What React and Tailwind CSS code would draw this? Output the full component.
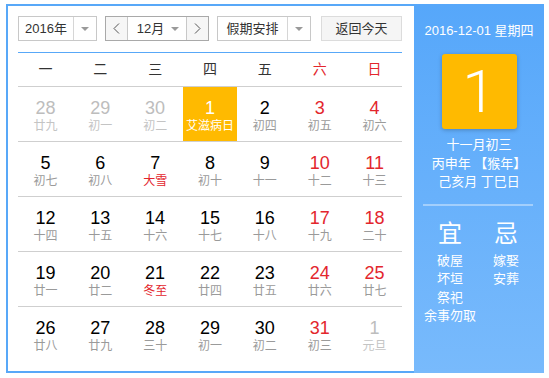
import React from 'react';

const RED = 'text-[#e3262d]';

const weeks = [
  [
    { d: '28', l: '廿九', other: true },
    { d: '29', l: '初一', other: true },
    { d: '30', l: '初二', other: true },
    { d: '1', l: '艾滋病日', today: true },
    { d: '2', l: '初四' },
    { d: '3', l: '初五', weekend: true },
    { d: '4', l: '初六', weekend: true },
  ],
  [
    { d: '5', l: '初七' },
    { d: '6', l: '初八' },
    { d: '7', l: '大雪', term: true },
    { d: '8', l: '初十' },
    { d: '9', l: '十一' },
    { d: '10', l: '十二', weekend: true },
    { d: '11', l: '十三', weekend: true },
  ],
  [
    { d: '12', l: '十四' },
    { d: '13', l: '十五' },
    { d: '14', l: '十六' },
    { d: '15', l: '十七' },
    { d: '16', l: '十八' },
    { d: '17', l: '十九', weekend: true },
    { d: '18', l: '二十', weekend: true },
  ],
  [
    { d: '19', l: '廿一' },
    { d: '20', l: '廿二' },
    { d: '21', l: '冬至', term: true },
    { d: '22', l: '廿四' },
    { d: '23', l: '廿五' },
    { d: '24', l: '廿六', weekend: true },
    { d: '25', l: '廿七', weekend: true },
  ],
  [
    { d: '26', l: '廿八' },
    { d: '27', l: '廿九' },
    { d: '28', l: '三十' },
    { d: '29', l: '初一' },
    { d: '30', l: '初二' },
    { d: '31', l: '初三', weekend: true },
    { d: '1', l: '元旦', other: true },
  ],
];

const weekdays = ['一', '二', '三', '四', '五', '六', '日'];

const Caret = () => (
  <span className="block w-0 h-0 border-l-[4px] border-r-[4px] border-t-[4px] border-l-transparent border-r-transparent border-t-[#9a9a9a]" />
);

const Chevron = ({ dir }) => (
  <svg width="7" height="11" viewBox="0 0 7 11">
    <polyline
      points={dir === 'left' ? '6,0.5 1,5.5 6,10.5' : '1,0.5 6,5.5 1,10.5'}
      fill="none"
      stroke="#555"
      strokeWidth="1"
    />
  </svg>
);

const DayCell = ({ day }) => {
  let numColor = 'text-black';
  let lunarColor = 'text-[#9a9a9a]';
  if (day.other) {
    numColor = 'text-[#bdbdbd]';
    lunarColor = 'text-[#c4c4c4]';
  }
  if (day.weekend) numColor = RED;
  if (day.term) lunarColor = RED;
  if (day.today) {
    numColor = 'text-white';
    lunarColor = 'text-white';
  }

  return (
    <div className={`flex flex-col items-center pt-[11px] ${day.today ? 'bg-[#ffba00]' : ''}`}>
      <div className={`text-[18px] leading-[20px] ${numColor}`} style={{ fontFamily: '"Liberation Sans", Arial, sans-serif' }}>
        {day.d}
      </div>
      <div className={`text-[12px] leading-[16px] whitespace-nowrap ${lunarColor}`}>{day.l}</div>
    </div>
  );
};

export default function App() {
  return (
    <div
      className="pl-[6px] pt-[4px] bg-white min-h-[378px]"
      style={{ fontFamily: '"Liberation Sans", "Noto Sans CJK SC", sans-serif' }}
    >
      <div className="flex w-[538px] h-[369px]">
        {/* Calendar */}
        <div className="w-[408px] border-l-2 border-t-2 border-b-2 border-[#58a8f8] pl-[10px] pr-[12px] pt-[10px] bg-white">
          {/* Controls */}
          <div className="flex h-[25px] text-[13px] text-[#333]">
            <div className="flex w-[79px] border border-[#c8c8c8]">
              <div className="w-[55px] flex items-center justify-center border-r border-[#d6d6d6]">2016年</div>
              <div className="flex-1 flex items-center justify-center">
                <Caret />
              </div>
            </div>
            <div className="flex w-[104px] ml-[8px] border border-[#a9a9a9]">
              <div className="w-[22px] flex items-center justify-center bg-[#f6f6f6] border-r border-[#c8c8c8]">
                <Chevron dir="left" />
              </div>
              <div className="flex-1 flex items-center justify-center gap-[7px] pl-[2px]">
                <span>12月</span>
                <Caret />
              </div>
              <div className="w-[22px] flex items-center justify-center bg-[#f6f6f6] border-l border-[#c8c8c8]">
                <Chevron dir="right" />
              </div>
            </div>
            <div className="flex w-[94px] ml-[8px] border border-[#c8c8c8]">
              <div className="w-[70px] flex items-center justify-center border-r border-[#d6d6d6]">假期安排</div>
              <div className="flex-1 flex items-center justify-center">
                <Caret />
              </div>
            </div>
            <div className="w-[81px] ml-[10px] flex items-center justify-center bg-[#f5f5f5] border border-[#dcdcdc]">
              返回今天
            </div>
          </div>

          <div className="mt-[11px] h-px bg-[#58a8f8]" />

          {/* Weekday header */}
          <div className="grid grid-cols-7 h-[34px] border-b border-[#cfcfcf] text-[14px]">
            {weekdays.map((w, i) => (
              <div key={w} className={`flex items-center justify-center ${i >= 5 ? RED : 'text-[#333]'}`}>
                {w}
              </div>
            ))}
          </div>

          {/* Days */}
          {weeks.map((week, wi) => (
            <div
              key={wi}
              className={`grid grid-cols-7 h-[55px] ${wi < weeks.length - 1 ? 'border-b border-[#cfcfcf]' : ''}`}
            >
              {week.map((day, di) => (
                <DayCell key={di} day={day} />
              ))}
            </div>
          ))}
        </div>

        {/* Side panel */}
        <div className="w-[130px] bg-gradient-to-b from-[#56a7fa] to-[#78bafc] flex flex-col items-center text-white pt-[18px]">
          <div className="text-[13px] leading-[18px]">2016-12-01 星期四</div>
          <div className="mt-[14px] w-[75px] h-[75px] rounded-[3px] bg-[#ffba00] shadow-[0_1px_4px_rgba(0,0,0,0.25)] flex items-center justify-center">
            <span className="text-[60px] leading-none font-light" style={{ fontFamily: 'Roboto, "Liberation Sans", sans-serif' }}>
              1
            </span>
          </div>
          <div className="mt-[7px] text-[13px] leading-[18.5px] text-center">
            <div>十一月初三</div>
            <div>丙申年 【猴年】</div>
            <div>己亥月 丁巳日</div>
          </div>
          <div className="mt-[12px] w-[110px] h-[2px] bg-[#a3cffc] ml-[-2px]" />
          <div className="w-full grid grid-cols-2 mt-[14px] pl-[8px] pr-[10px]">
            <div className="flex flex-col items-center">
              <div className="text-[24px] leading-[28px] mb-[4px]">宜</div>
              <div className="text-[13px] leading-[18.5px] text-center">
                <div>破屋</div>
                <div>坏垣</div>
                <div>祭祀</div>
                <div>余事勿取</div>
              </div>
            </div>
            <div className="flex flex-col items-center">
              <div className="text-[24px] leading-[28px] mb-[4px]">忌</div>
              <div className="text-[13px] leading-[18.5px] text-center">
                <div>嫁娶</div>
                <div>安葬</div>
              </div>
            </div>
          </div>
        </div>
      </div>
    </div>
  );
}
